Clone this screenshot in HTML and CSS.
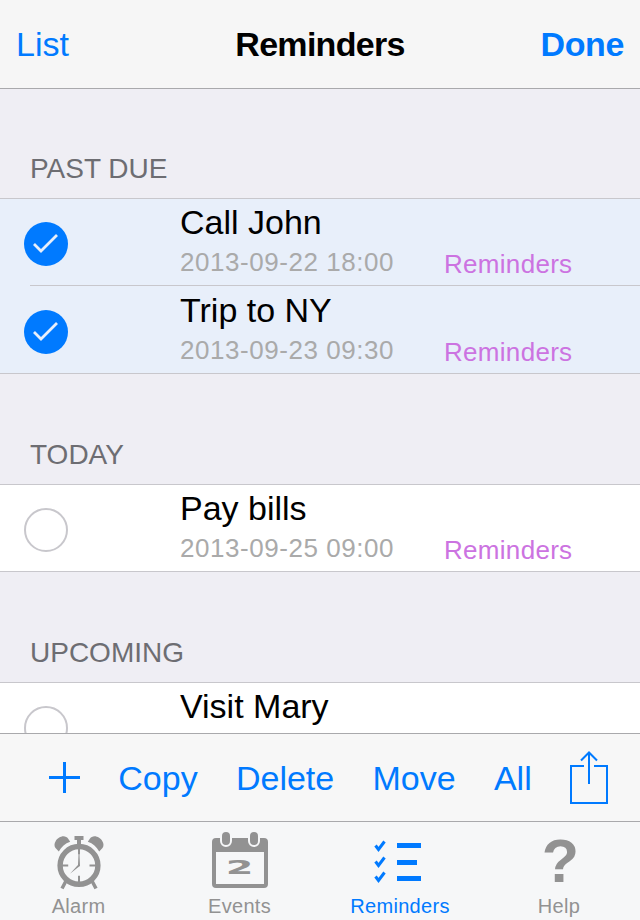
FILE: index.html
```html
<!DOCTYPE html>
<html lang="en">
<head>
    <meta charset="UTF-8">
    <meta name="viewport" content="width=device-width, initial-scale=1.0">
    <title>Reminders</title>
    <link rel="stylesheet" href="styles.css">
</head>
<body>
    <header class="navbar">
        <a class="nav-link">List</a>
        <h1>Reminders</h1>
        <a class="nav-link done">Done</a>
    </header>

    <main class="content">
        <h2 class="past">Past due</h2>
        <ul class="group">
            <li class="item selected">
                <div class="circle checked">
                    <svg width="44" height="44" viewBox="0 0 44 44"><path d="M10 22L17 29L33 13"/></svg>
                </div>
                <div class="info">
                    <div class="name">Call John</div>
                    <div class="date">2013-09-22 18:00</div>
                </div>
                <div class="list-name">Reminders</div>
            </li>
            <li class="item selected">
                <div class="circle checked">
                    <svg width="44" height="44" viewBox="0 0 44 44"><path d="M10 22L17 29L33 13"/></svg>
                </div>
                <div class="info">
                    <div class="name">Trip to NY</div>
                    <div class="date">2013-09-23 09:30</div>
                </div>
                <div class="list-name">Reminders</div>
            </li>
        </ul>

        <h2>Today</h2>
        <ul class="group">
            <li class="item">
                <div class="circle"></div>
                <div class="info">
                    <div class="name">Pay bills</div>
                    <div class="date">2013-09-25 09:00</div>
                </div>
                <div class="list-name">Reminders</div>
            </li>
        </ul>

        <h2>Upcoming</h2>
        <ul class="group">
            <li class="item">
                <div class="circle"></div>
                <div class="info">
                    <div class="name">Visit Mary</div>
                </div>
            </li>
        </ul>
    </main>

    <div class="toolbar">
        <svg width="31" height="31" viewBox="0 0 31 31"><path d="M0 15.5H31M15.5 0V31" stroke-width="3"/></svg>
        <a>Copy</a>
        <a>Delete</a>
        <a>Move</a>
        <a>All</a>
        <svg class="share" width="38" height="54" viewBox="0 0 38 54"><path d="M14 16H1V53H37V16H24M19 34V3M11 10.5L19 2.5L27 10.5" stroke-width="2"/></svg>
    </div>

    <nav class="tabbar">
        <a class="tab alarm">
            <svg width="60" height="60" viewBox="0 0 60 60">
                <circle cx="30" cy="35.4" r="18.9" fill="none" stroke="currentColor" stroke-width="5.4"/>
                <path d="M25.5 6h9v4h-2.500v5h-4v-5h-2.500z"/>
                <path d="M9.800 21.500L6.500 18C5 16 5.300 13.500 6.500 11.500C8 8.500 11.500 6.300 14.500 6.300C16.500 6.300 18 7.300 19 8.500L21.200 11.700C16 13.500 12.500 16.500 9.800 21.500z"/>
                <path d="M50.200 21.500L53.500 18C55 16 54.700 13.500 53.500 11.500C52 8.500 48.500 6.300 45.500 6.300C43.500 6.300 42 7.300 41 8.500L38.800 11.700C44 13.500 47.500 16.500 50.200 21.500z"/>
                <path d="M29 35L29.500 24.500H30.500L31 36L29.500 37L21 43.700L28 36z"/>
                <path d="M30 18v6.500M30 45.700v7M13 35.400h6.200M40.500 35.400h7" stroke="currentColor" stroke-width="2"/>
                <path d="M17.500 50L13 58.500M42.500 50L47 58.500" stroke="currentColor" stroke-width="3.500"/>
            </svg>
            <span>Alarm</span>
        </a>
        <a class="tab events">
            <svg width="60" height="60" viewBox="0 0 60 60">
                <path fill-rule="evenodd" d="M6 8h48a4 4 0 0 1 4 4v42a4 4 0 0 1-4 4H6a4 4 0 0 1-4-4V12a4 4 0 0 1 4-4zM6 22v32h48V22z"/>
                <rect class="ring" x="11" y="1" width="10" height="15" rx="5"/>
                <rect class="ring" x="39" y="1" width="10" height="15" rx="5"/>
                <text transform="translate(29.5 43.5) scale(2.1 1)" text-anchor="middle">2</text>
            </svg>
            <span>Events</span>
        </a>
        <a class="tab active">
            <svg width="60" height="60" viewBox="0 0 60 60">
                <path d="M27 13h24v5H27zM27 30h20v5H27zM27 46h24v5H27z"/>
                <path d="M5.500 15.500L8.500 19.500L14.500 11.500M5.500 31.500L8.500 35.500L14.500 27.500M5.500 46.500L8.500 50.500L14.500 42.500" fill="none" stroke="currentColor" stroke-width="3"/>
            </svg>
            <span>Reminders</span>
        </a>
        <a class="tab help">
            <div class="question">?</div>
            <span>Help</span>
        </a>
    </nav>
</body>
</html>
```

FILE: styles.css
```css
* {
    margin: 0;
    padding: 0;
    box-sizing: border-box;
}
body {
    display: flex;
    flex-direction: column;
    width: 640px;
    height: 920px;
    overflow: hidden;
    font-family: "Liberation Sans", Arial, sans-serif;
    background-color: #efeef4;
    color: #000;
}

/* Top bar */
.navbar {
    display: grid;
    grid-template-columns: 1fr auto 1fr;
    align-items: center;
    height: 89px;
    padding: 0 16px;
    background-color: #f6f6f6;
    border-bottom: 1px solid #a9a9ac;
    font-size: 34px;
}
h1 {
    font-size: 34px;
    letter-spacing: -0.7px;
}
.nav-link {
    color: #007aff;
}
.done {
    font-weight: bold;
    letter-spacing: -0.4px;
    text-align: right;
}

/* Reminder groups */
.content {
    flex: 1;
    overflow: hidden;
}
h2 {
    height: 110px;
    padding: 65px 0 0 30px;
    font-size: 28px;
    line-height: 32px;
    font-weight: normal;
    text-transform: uppercase;
    color: #6d6d72;
}
.past {
    height: 109px;
    padding-top: 64px;
}
.group {
    list-style: none;
    border-top: 1px solid #c8c7cc;
    border-bottom: 1px solid #c8c7cc;
}
.item {
    display: flex;
    height: 86px;
    padding-left: 24px;
    background-color: #fff;
}
.selected {
    background-color: #e8effa;
}
.item + .item {
    height: 88px;
    background-image: linear-gradient(#c8c7cc, #c8c7cc);
    background-size: 610px 1px;
    background-position: right top;
    background-repeat: no-repeat;
    padding-top: 2px;
}
.circle {
    width: 44px;
    height: 44px;
    margin-top: 23px;
    border: 2px solid #c8c7cc;
    border-radius: 50%;
}
.checked {
    border: none;
    background-color: #007aff;
}
.checked path {
    fill: none;
    stroke: #e8effa;
    stroke-width: 2.8;
}
.info {
    width: 264px;
    margin-left: 112px;
    padding-top: 3px;
    white-space: nowrap;
}
.name {
    font-size: 34px;
    line-height: 40px;
}
.date {
    font-size: 26px;
    line-height: 40px;
    letter-spacing: 0.55px;
    color: #aaa;
}
.list-name {
    padding-top: 50px;
    font-size: 26px;
    line-height: 30px;
    letter-spacing: 0.3px;
    color: #cc73e1;
}

/* Edit actions */
.toolbar {
    display: flex;
    justify-content: space-between;
    align-items: center;
    height: 88px;
    padding: 0 32px 0 49px;
    border-top: 1px solid #a9a9ac;
    background-color: #f7f7f7;
    font-size: 34px;
    color: #007aff;
}
.toolbar a {
    padding-top: 2px;
}
.toolbar path {
    fill: none;
    stroke: currentColor;
}
.share {
    margin-bottom: 2px;
}

/* Bottom tabs */
.tabbar {
    display: grid;
    grid-template-columns: 157px 165px 156px 162px;
    height: 99px;
    border-top: 1px solid #a9a9ac;
    background-color: #f6f7f8;
}
.tab {
    display: flex;
    flex-direction: column;
    align-items: center;
    padding-top: 8px;
    font-size: 20px;
    line-height: 24px;
    letter-spacing: 0.3px;
    color: #929292;
}
.tab svg {
    fill: currentColor;
    margin-bottom: 4px;
}
.active {
    color: #007aff;
}
.ring {
    stroke: #f6f7f8;
    stroke-width: 2;
}
.events text {
    font: bold 19px "DejaVu Sans", sans-serif;
    letter-spacing: 0;
}
.question {
    height: 64px;
    padding-left: 3px;
    font-size: 61px;
    line-height: 62px;
    font-weight: bold;
}
```
